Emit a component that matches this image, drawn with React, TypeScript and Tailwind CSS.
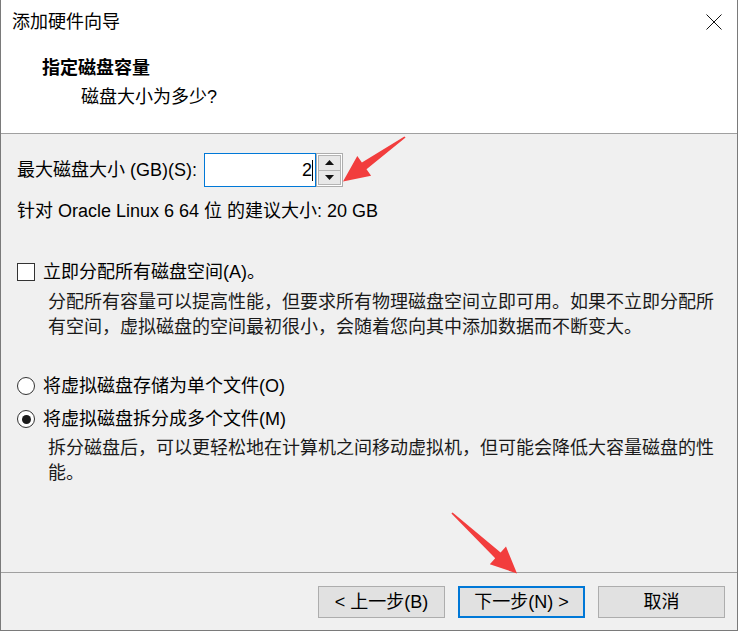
import type { ReactNode } from 'react';

const font = {
  fontFamily: '"Liberation Sans", "Noto Sans CJK SC", sans-serif',
};

function WinButton({
  children,
  primary = false,
}: {
  children: ReactNode;
  primary?: boolean;
}) {
  return (
    <button
      className={
        primary
          ? 'flex h-[32px] w-[127px] items-center justify-center border-2 border-[#0078d7] bg-[#e1e1e1] text-[18px] text-black'
          : 'flex h-[32px] w-[127px] items-center justify-center border border-[#adadad] bg-[#e1e1e1] text-[18px] text-black'
      }
    >
      {children}
    </button>
  );
}

function Radio({ checked }: { checked?: boolean }) {
  return (
    <span className="flex h-[18px] w-[18px] items-center justify-center rounded-full border border-[#333] bg-white">
      {checked && <span className="h-[9px] w-[9px] rounded-full bg-[#1a1a1a]" />}
    </span>
  );
}

function Arrows() {
  return (
    <svg
      className="pointer-events-none absolute left-0 top-0"
      width="739"
      height="632"
      viewBox="0 0 739 632"
    >
      <polygon
        fill="#f23d3d"
        points="405.6,137.6 366.5,169.2 371.1,175.7 343,181.5 357.3,156.1 361.9,162.6 404.4,136.4"
      />
      <polygon
        fill="#f23d3d"
        points="451.4,513.6 495.2,558.3 489.8,564.2 517,573.5 506,546.6 500.6,552.5 452.6,512.4"
      />
    </svg>
  );
}

export default function App() {
  return (
    <div className="relative h-[632px] w-[739px] bg-white" style={font}>
      <div className="flex h-[631px] w-[738px] flex-col border-b border-l border-r border-[#7a7a7a] bg-[#f0f0f0] text-black">
        <div className="h-[134px] border-b border-[#a0a0a0] bg-white">
          <div className="flex h-[44px] items-center justify-between pl-[11px] pr-[15px]">
            <span className="text-[18px] leading-[24px]">添加硬件向导</span>
            <svg width="16" height="16" viewBox="0 0 16 16">
              <path d="M0.5 0.5 L15.5 15.5 M15.5 0.5 L0.5 15.5" stroke="#111" strokeWidth="1" fill="none" />
            </svg>
          </div>
          <div className="mt-[12px] pl-[41px] text-[18px] font-bold leading-[24px]">
            指定磁盘容量
          </div>
          <div className="mt-[5px] pl-[80px] text-[18px] leading-[24px]">
            磁盘大小为多少?
          </div>
        </div>

        <div className="flex-1 pl-[16px]">
          <div className="mt-[19px] flex items-center">
            <span className="w-[187px] text-[18px] leading-[24px]">
              最大磁盘大小 (GB)(S):
            </span>
            <div className="flex h-[34px] w-[112px] items-center justify-end border border-[#0078d7] bg-white pr-[2px] text-[18px]">
              <span>2</span>
              <span className="h-[21px] w-px bg-black" />
            </div>
            <div className="flex h-[34px] w-[27px] flex-col border border-[#adadad] bg-white p-px">
              <div className="flex flex-1 items-center justify-center border border-[#b4b4b4] bg-[#e8e8e8]">
                <svg width="9" height="5" viewBox="0 0 9 5">
                  <polygon points="0,5 9,5 4.5,0" fill="#111" />
                </svg>
              </div>
              <div className="flex flex-1 items-center justify-center border border-t-0 border-[#b4b4b4] bg-[#e8e8e8]">
                <svg width="9" height="5" viewBox="0 0 9 5">
                  <polygon points="0,0 9,0 4.5,5" fill="#111" />
                </svg>
              </div>
            </div>
          </div>

          <div className="mt-[12px] text-[18px] leading-[24px]">
            针对 Oracle Linux 6 64 位 的建议大小: 20 GB
          </div>

          <div className="mt-[37px] flex h-[24px] items-center gap-[8px]">
            <span className="h-[18px] w-[18px] border border-[#333] bg-white" />
            <span className="text-[18px] leading-[24px]">立即分配所有磁盘空间(A)。</span>
          </div>
          <p className="mt-[6px] w-[703px] pl-[31px] text-[18px] leading-[25px] text-[#1a1a1a]">
            分配所有容量可以提高性能，但要求所有物理磁盘空间立即可用。如果不立即分配所有空间，虚拟磁盘的空间最初很小，会随着您向其中添加数据而不断变大。
          </p>

          <div className="mt-[34px] flex h-[24px] items-center gap-[8px]">
            <Radio />
            <span className="text-[18px] leading-[24px]">将虚拟磁盘存储为单个文件(O)</span>
          </div>
          <div className="mt-[9px] flex h-[24px] items-center gap-[8px]">
            <Radio checked />
            <span className="text-[18px] leading-[24px]">将虚拟磁盘拆分成多个文件(M)</span>
          </div>
          <p className="mt-[5px] w-[703px] pl-[31px] text-[18px] leading-[25px] text-[#1a1a1a]">
            拆分磁盘后，可以更轻松地在计算机之间移动虚拟机，但可能会降低大容量磁盘的性能。
          </p>
        </div>

        <div className="flex h-[58px] items-start justify-end gap-[13px] border-t border-[#a0a0a0] pr-[12px] pt-[13px]">
          <WinButton>&lt; 上一步(B)</WinButton>
          <WinButton primary>下一步(N) &gt;</WinButton>
          <WinButton>取消</WinButton>
        </div>
      </div>
      <Arrows />
    </div>
  );
}
